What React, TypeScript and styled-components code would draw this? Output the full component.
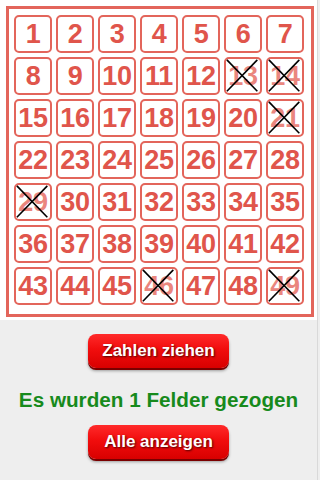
import React from "react";
import styled, { createGlobalStyle } from "styled-components";

const Global = createGlobalStyle`
  html, body { margin: 0; padding: 0; background: #eeeeee; }
  body { font-family: "Liberation Sans", Arial, sans-serif; width: 320px; height: 480px; overflow: hidden; }
`;

const Page = styled.div`
  width: 318px;
  min-height: 480px;
  background: #eeeeee;
  border-right: 1px solid #d9d9d9;
  box-sizing: border-box;
`;

const BoardArea = styled.div`
  background: #ffffff;
  height: 320px;
  padding: 6px 0 0 6px;
  box-sizing: border-box;
`;

const Frame = styled.div`
  width: 308px;
  height: 311px;
  box-sizing: border-box;
  border: 3px solid #e3655b;
  padding: 6px 0 0 5px;
  display: grid;
  grid-template-columns: repeat(7, 38px);
  grid-auto-rows: 38px;
  gap: 4px;
`;

const Cell = styled.div<{ $crossed: boolean }>`
  position: relative;
  box-sizing: border-box;
  border: 2px solid #e3655b;
  border-radius: 5px;
  display: flex;
  align-items: center;
  justify-content: center;
  font-family: "Liberation Sans", Arial, sans-serif;
  font-weight: bold;
  font-size: 27px;
  letter-spacing: -0.3px;
  color: ${(p) => (p.$crossed ? "#ea867e" : "#e0554b")};
`;

const Cross = styled.svg`
  position: absolute;
  left: 0;
  top: 0;
  width: 100%;
  height: 100%;
  pointer-events: none;
`;

const Controls = styled.div`
  display: flex;
  flex-direction: column;
  align-items: center;
  padding-top: 14px;
`;

const RedButton = styled.button`
  width: 141px;
  height: 34px;
  border: none;
  border-radius: 8px;
  background: linear-gradient(#ff2a2a 0%, #f10d0d 45%, #d80000 100%);
  box-shadow: 0 2px 0 #7a0000, 0 3px 3px rgba(0, 0, 0, 0.35);
  color: #ffffff;
  font-family: "Liberation Sans", Arial, sans-serif;
  font-weight: bold;
  font-size: 17px;
  text-shadow: 1px 1px 2px rgba(60, 0, 0, 0.9);
  padding: 0;
  cursor: pointer;
`;

const Status = styled.div`
  margin: 19px 0 13px;
  font-family: "Liberation Sans", Arial, sans-serif;
  font-weight: bold;
  font-size: 20.7px;
  line-height: 25px;
  color: #178a1c;
`;

const crossed = new Set([13, 14, 21, 29, 46, 49]);

export default function App() {
  const nums = Array.from({ length: 49 }, (_, i) => i + 1);
  return (
    <Page>
      <Global />
      <BoardArea>
        <Frame>
          {nums.map((n) => (
            <Cell key={n} $crossed={crossed.has(n)}>
              {n}
              {crossed.has(n) && (
                <Cross viewBox="0 0 38 38">
                  <line x1="1" y1="1" x2="35" y2="36" stroke="#000" strokeWidth="1.8" />
                  <line x1="35" y1="1" x2="1" y2="36" stroke="#000" strokeWidth="1.8" />
                </Cross>
              )}
            </Cell>
          ))}
        </Frame>
      </BoardArea>
      <Controls>
        <RedButton>Zahlen ziehen</RedButton>
        <Status>Es wurden 1 Felder gezogen</Status>
        <RedButton>Alle anzeigen</RedButton>
      </Controls>
    </Page>
  );
}
